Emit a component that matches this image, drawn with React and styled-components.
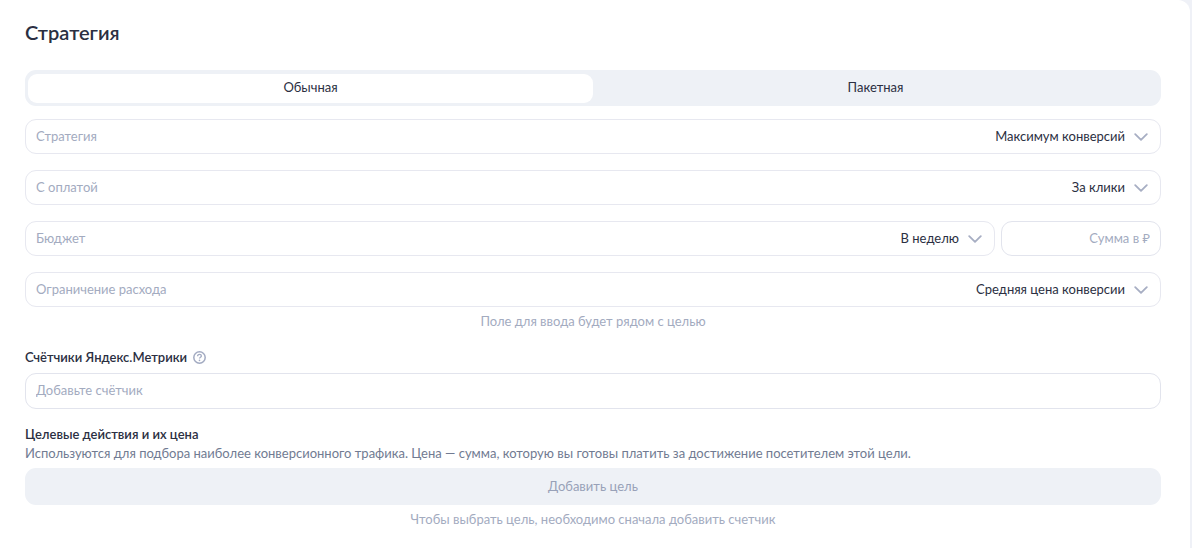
import React, { useState } from 'react'
import styled, { createGlobalStyle } from 'styled-components'

const GlobalStyle = createGlobalStyle`
* {
  box-sizing: border-box;
}
body {
  margin: 0;
  background-color: #eff1f7;
  font-family: Lato, "Noto Sans", sans-serif;
  font-size: 13px;
  line-height: 18px;
  color: #2b2f42;
}
button, input, select {
  font: inherit;
  color: inherit;
  margin: 0;
}
`

const Card = styled.main`
min-height: 100vh;
margin-right: 2px;
padding: 19px 29px 20px 25px;
background-color: white;
border-radius: 0 12px 0 0;
`

const Title = styled.h1`
margin: 0 0 25px;
font-size: 20px;
line-height: 26px;
font-weight: 600;
`

const Tabs = styled.div`
display: flex;
height: 36px;
padding: 4px 3px 3px;
border-radius: 11px;
background-color: #eef1f6;
`

const Tab = styled.button`
flex: 1;
padding: 0 0 4px;
border: none;
border-radius: 9px;
cursor: pointer;
background-color: ${(props) => (props.$active ? 'white' : 'transparent')};
`

const Fields = styled.div`
display: flex;
flex-direction: column;
gap: 16px;
margin-top: 13px;
`

const Row = styled.div`
display: flex;
gap: 6px;
`

const Field = styled.div`
display: flex;
align-items: center;
width: 100%;
height: 35px;
padding: 0 12px 0 10px;
border: 1px solid #e7e8f0;
border-radius: 11px;
`

const FieldLabel = styled.label`
padding-bottom: 2px;
color: #a3abbf;
`

const Select = styled.select`
flex: 1;
height: 100%;
padding: 0 0 2px;
margin-right: 9px;
border: none;
outline: none;
appearance: none;
background: transparent;
text-align: right;
text-align-last: right;
cursor: pointer;
`

const Input = styled.input`
flex: none;
width: ${(props) => props.$width || '100%'};
height: ${(props) => (props.$width ? '35px' : '36px')};
padding: 0 10px 2px;
border: 1px solid #e2e4ed;
border-radius: 11px;
outline: none;
background-color: white;
text-align: ${(props) => props.$align || 'left'};
&::placeholder {
  color: #a3abbf;
  opacity: 1;
}
`

const Hint = styled.p`
margin: 5px 0 0;
text-align: center;
color: #a3abbf;
`

const Section = styled.section`
margin-top: ${(props) => props.$top};
`

const Heading = styled.div`
display: flex;
align-items: center;
gap: 6px;
margin-bottom: 7px;
`

const HeadingLabel = styled.label`
font-weight: 600;
`

const Subtitle = styled.h2`
margin: 0;
font-size: 13px;
line-height: 18px;
font-weight: 600;
`

const HelpButton = styled.button`
display: flex;
padding: 0;
border: none;
background: none;
cursor: pointer;
`

const Description = styled.p`
margin: 1px 0 6px;
color: #717b92;
`

const AddButton = styled.button`
width: 100%;
height: 37px;
padding: 0 0 2px;
border: none;
border-radius: 11px;
background-color: #eef1f6;
color: #98a1b8;
`

const Chevron = () => (
    <svg width="14" height="8" viewBox="0 0 14 8" fill="none" aria-hidden="true">
        <path d="M1.2 1.2L7 6.8l5.8-5.6" stroke="#a7aec3" strokeWidth="1.8" strokeLinecap="round" strokeLinejoin="round"/>
    </svg>
)

const HelpIcon = () => (
    <svg width="13" height="13" viewBox="0 0 13 13" fill="none" stroke="#a3abc2" aria-hidden="true">
        <circle cx="6.5" cy="6.5" r="5.7" strokeWidth="1.5"/>
        <path d="M4.6 5.2c0-1.2.8-1.9 1.9-1.9s1.9.7 1.9 1.7c0 1.3-1.9 1.3-1.9 2.6" strokeWidth="1.3"/>
        <circle cx="6.5" cy="9.4" r=".8" fill="#a3abc2" stroke="none"/>
    </svg>
)

const SelectField = ({ id, label, options }) => (
    <Field>
        <FieldLabel htmlFor={id}>{label}</FieldLabel>
        <Select id={id}>
            {options.map((option) => (
                <option key={option}>{option}</option>
            ))}
        </Select>
        <Chevron/>
    </Field>
)

export default function App() {
    const [tab, setTab] = useState('Обычная')

    return (
        <>
            <GlobalStyle/>
            <Card>
                <Title>Стратегия</Title>
                <Tabs role="tablist">
                    {['Обычная', 'Пакетная'].map((name) => (
                        <Tab
                            key={name}
                            type="button"
                            role="tab"
                            aria-selected={tab === name}
                            $active={tab === name}
                            onClick={() => setTab(name)}
                        >
                            {name}
                        </Tab>
                    ))}
                </Tabs>
                <Fields>
                    <SelectField id="strategy" label="Стратегия" options={['Максимум конверсий']}/>
                    <SelectField id="payment" label="С оплатой" options={['За клики']}/>
                    <Row>
                        <SelectField id="budget" label="Бюджет" options={['В неделю']}/>
                        <Input $width="160px" $align="right" placeholder="Сумма в ₽" aria-label="Сумма в ₽"/>
                    </Row>
                    <SelectField id="limit" label="Ограничение расхода" options={['Средняя цена конверсии']}/>
                </Fields>
                <Hint>Поле для ввода будет рядом с целью</Hint>
                <Section $top="18px">
                    <Heading>
                        <HeadingLabel htmlFor="counter">Счётчики Яндекс.Метрики</HeadingLabel>
                        <HelpButton type="button" aria-label="Справка">
                            <HelpIcon/>
                        </HelpButton>
                    </Heading>
                    <Input id="counter" placeholder="Добавьте счётчик"/>
                </Section>
                <Section $top="16px">
                    <Subtitle>Целевые действия и их цена</Subtitle>
                    <Description>
                        Используются для подбора наиболее конверсионного трафика. Цена — сумма, которую вы готовы платить за достижение посетителем этой цели.
                    </Description>
                    <AddButton type="button" disabled>Добавить цель</AddButton>
                    <Hint>Чтобы выбрать цель, необходимо сначала добавить счетчик</Hint>
                </Section>
            </Card>
        </>
    )
}
